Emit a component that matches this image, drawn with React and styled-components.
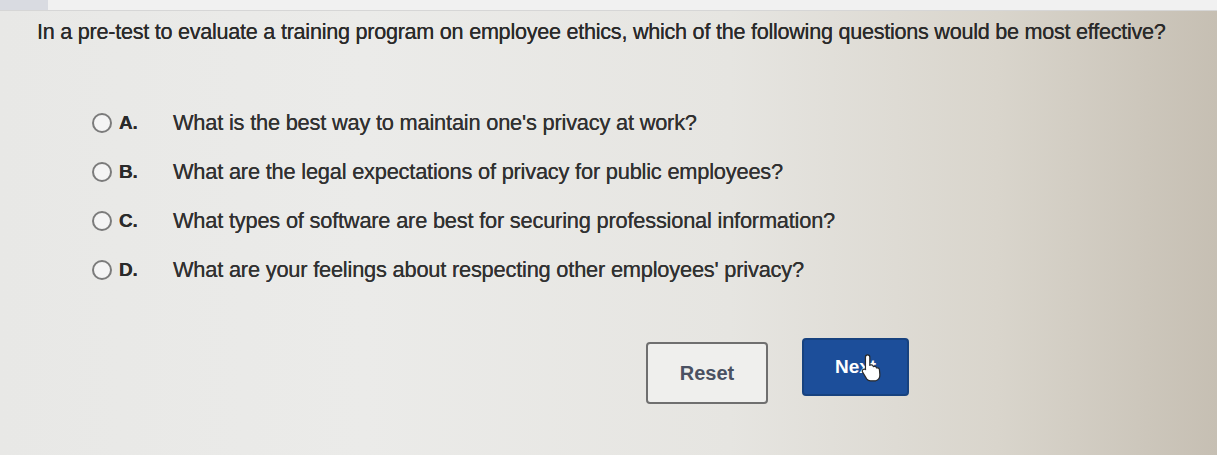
import React from 'react';
import styled, { createGlobalStyle } from 'styled-components';

const GlobalStyle = createGlobalStyle`
  html, body {
    margin: 0;
    padding: 0;
  }
  body {
    font-family: "Liberation Sans", Arial, sans-serif;
    background: #e9e9e7;
  }
`;

const Page = styled.div`
  position: relative;
  width: 1217px;
  height: 455px;
  overflow: hidden;
  background: linear-gradient(
    90deg,
    #e8e8e6 0%,
    #ebebe9 30%,
    #e6e5e1 60%,
    #d9d5cc 82%,
    #c6bfb3 100%
  );
`;

const TopStrip = styled.div`
  display: flex;
  height: 10px;
  background: #f1f1f1;
  border-bottom: 1px solid #d6d6d6;

  span {
    width: 48px;
    background: #d9dbe1;
  }
`;

const Content = styled.div`
  padding: 8px 0 0 37px;
`;

const Question = styled.p`
  margin: 0;
  font-size: 21.6px;
  line-height: 26px;
  color: #2a2a2a;
  letter-spacing: -0.25px;
  text-shadow: 0 0 0.5px #2a2a2a;
`;

const Options = styled.ul`
  list-style: none;
  margin: 65px 0 0 55px;
  padding: 0;
  display: flex;
  flex-direction: column;
  gap: 23px;
`;

const Option = styled.li`
  display: flex;
  align-items: center;
  height: 26px;
  font-size: 21.8px;
  letter-spacing: -0.2px;
  color: #313131;
  text-shadow: 0 0 0.5px #313131;
`;

const Radio = styled.span`
  width: 16px;
  height: 16px;
  border: 2px solid #7b7b7b;
  border-radius: 50%;
  background: #f4f4f4;
  flex-shrink: 0;
`;

const Letter = styled.span`
  width: 54px;
  margin-left: 7px;
  font-size: 19px;
  font-weight: bold;
  color: #2a2a2a;
`;

const Buttons = styled.div`
  display: flex;
  align-items: flex-start;
  gap: 34px;
  margin: 55px 0 0 609px;
`;

const Button = styled.button`
  position: relative;
  font-family: "Liberation Sans", Arial, sans-serif;
  font-size: ${(p) => (p.$primary ? '19px' : '20px')};
  font-weight: bold;
  border-radius: 4px;
  cursor: pointer;
  padding: 0;
  width: ${(p) => (p.$primary ? '107px' : '122px')};
  height: ${(p) => (p.$primary ? '58px' : '62px')};
  margin-top: ${(p) => (p.$primary ? '0' : '4px')};
  color: ${(p) => (p.$primary ? '#ffffff' : '#4a5162')};
  background: ${(p) => (p.$primary ? '#1c4e9a' : '#efefed')};
  border: ${(p) => (p.$primary ? '2px solid #17427f' : '2px solid #6f6f6f')};
`;

const Hand = styled.svg`
  position: absolute;
  left: 56px;
  top: 12px;
`;

const options = [
  ['A.', "What is the best way to maintain one's privacy at work?"],
  ['B.', 'What are the legal expectations of privacy for public employees?'],
  ['C.', 'What types of software are best for securing professional information?'],
  ['D.', "What are your feelings about respecting other employees' privacy?"],
];

export default function App() {
  return (
    <>
      <GlobalStyle />
      <Page>
        <TopStrip>
          <span />
        </TopStrip>
        <Content>
          <Question>
            In a pre-test to evaluate a training program on employee ethics, which of the
            following questions would be most effective?
          </Question>
          <Options>
            {options.map(([letter, text]) => (
              <Option key={letter}>
                <Radio />
                <Letter>{letter}</Letter>
                {text}
              </Option>
            ))}
          </Options>
          <Buttons>
            <Button>Reset</Button>
            <Button $primary>
              Next
              <Hand width="24" height="31" viewBox="0 0 22 28">
                <path
                  d="M7 2.5c1.1 0 2 .9 2 2V12l1-.3c.9-.2 1.8.3 2.1 1.1l.2.4.7-.2c.9-.2 1.8.3 2.1 1.1l.1.3.6-.1c1-.1 1.9.6 2 1.6l.4 4.4c.2 2.6-1.3 5-3.8 5.9H9.6c-1.4 0-2.7-.7-3.5-1.8L2.4 18.3c-.6-.8-.4-1.9.4-2.5.7-.5 1.7-.4 2.3.2L5 16.3V4.5c0-1.1.9-2 2-2z"
                  fill="#ffffff"
                  stroke="#2a2a2a"
                  strokeWidth="1.1"
                />
              </Hand>
            </Button>
          </Buttons>
        </Content>
      </Page>
    </>
  );
}
